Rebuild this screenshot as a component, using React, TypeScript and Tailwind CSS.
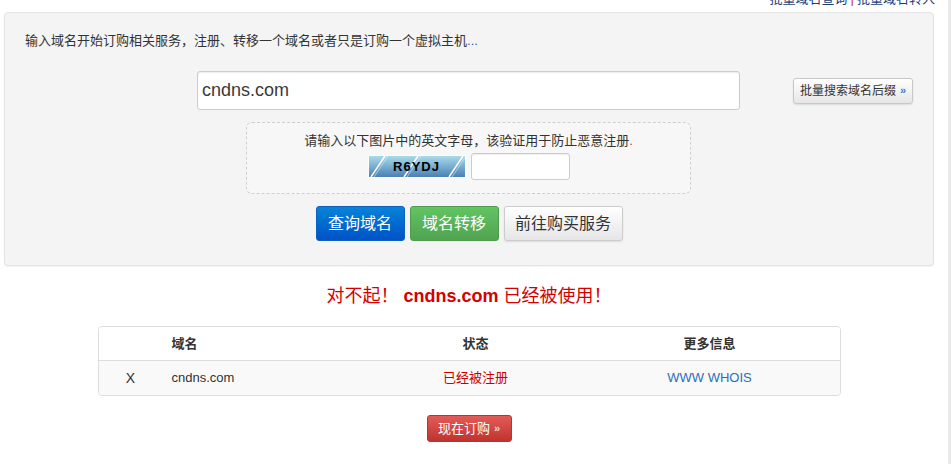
import React from 'react';

const font = { fontFamily: '"Liberation Sans", "Noto Sans CJK SC", sans-serif' };

function Captcha() {
  return (
    <div className="relative w-[98px] h-[23px] border border-white flex items-center justify-center">
      <svg className="absolute inset-0" width="96" height="21" viewBox="0 0 96 21">
        <defs>
          <linearGradient id="cap" x1="0" y1="0" x2="0" y2="1">
            <stop offset="0" stopColor="#a9dbea" />
            <stop offset="1" stopColor="#4a7fb4" />
          </linearGradient>
        </defs>
        <rect width="96" height="21" fill="url(#cap)" />
        <path d="M2 21 L16 0 M35 21 L49 0 M80 21 L94 0" stroke="#ffffff" strokeWidth="1.5" />
        <path d="M5 21 L19 0 M38 21 L52 0 M83 21 L97 0" stroke="#d8eef6" strokeWidth="0.6" />
      </svg>
      <span className="relative text-[13px] font-bold text-black tracking-[1px] leading-none" style={{ fontFamily: '"Liberation Sans", sans-serif' }}>
        R6YDJ
      </span>
    </div>
  );
}

export default function App() {
  return (
    <div className="w-[951px] h-[464px] overflow-hidden bg-white flex text-[#333]" style={font}>
      <div className="w-[948px] flex flex-col">
        {/* top links, half clipped by the window */}
        <div className="-mt-[8px] h-[20px] flex justify-end pr-[13px] text-[13px] leading-[13px]">
          <span className="text-[#16407a]">批量域名查询</span>
          <span className="text-[#c0392b] px-[3px]">|</span>
          <span className="text-[#16407a]">批量域名转入</span>
        </div>

        {/* search panel */}
        <div className="ml-[4px] w-[930px] h-[254px] rounded-[4px] border border-[#e3e3e3] bg-[#f4f4f4] shadow-[0_1px_1px_rgba(0,0,0,0.05)] flex flex-col">
          <p className="pt-[19px] pl-[20px] text-[13px] leading-[18px] text-[#333]">
            输入域名开始订购相关服务，注册、转移一个域名或者只是订购一个虚拟主机<span className="text-[#2a6ebb]">...</span>
          </p>

          <div className="mt-[21px] flex items-center">
            <div className="ml-[192px] w-[543px] h-[39px] bg-white border border-[#cccccc] rounded-[3px] shadow-[inset_0_1px_1px_rgba(0,0,0,0.075)] flex items-center pl-[4px] text-[18px] text-[#3a3a3a]">
              cndns.com
            </div>
            <button className="ml-[53px] w-[120px] h-[26px] rounded-[3px] border border-[#c8c8c8] bg-gradient-to-b from-white to-[#e6e6e6] shadow-[0_1px_2px_rgba(0,0,0,0.1)] text-[12px] text-[#333] flex items-center justify-center gap-[4px]">
              批量搜索域名后缀<span className="text-[#3a7bc8] text-[11px] font-bold">»</span>
            </button>
          </div>

          <div className="mt-[12px] ml-[241px] w-[445px] h-[72px] rounded-[6px] border border-dashed border-[#cfcfcf] bg-[#f7f7f7] flex flex-col items-center">
            <p className="pt-[9px] text-[13px] leading-[18px] text-[#333]">
              请输入以下图片中的英文字母，该验证用于防止恶意注册<span className="text-[#c0392b]">.</span>
            </p>
            <div className="mt-[3px] flex items-center gap-[5px]">
              <Captcha />
              <div className="w-[99px] h-[27px] bg-white border border-[#cccccc] rounded-[3px] shadow-[inset_0_1px_1px_rgba(0,0,0,0.075)]" />
            </div>
          </div>

          <div className="mt-[12px] flex justify-center gap-[5px] text-[16px] leading-none">
            <button className="w-[89px] h-[35px] rounded-[3px] border border-[#0a5fc0] bg-gradient-to-b from-[#0b83d8] to-[#0052c8] text-white">
              查询域名
            </button>
            <button className="w-[89px] h-[35px] rounded-[3px] border border-[#4f9c4f] bg-gradient-to-b from-[#62c462] to-[#51a351] text-white">
              域名转移
            </button>
            <button className="w-[119px] h-[35px] rounded-[3px] border border-[#cccccc] bg-gradient-to-b from-white to-[#e6e6e6] shadow-[0_1px_2px_rgba(0,0,0,0.1)] text-[#333]">
              前往购买服务
            </button>
          </div>
        </div>

        {/* result */}
        <div className="ml-[4px] w-[930px] flex flex-col items-center">
          <p className="mt-[18px] text-[18px] leading-[24px] text-[#d40000]">
            对不起！ <span className="font-bold">cndns.com</span> 已经被使用！
          </p>

          <div className="mt-[18px] w-[743px] rounded-[4px] border border-[#dddddd] overflow-hidden text-[13px]">
            <div className="h-[34px] bg-white flex items-center font-bold text-[#333] border-b border-[#dddddd]">
              <div className="w-[64px]" />
              <div className="w-[209px] pl-[9px]">域名</div>
              <div className="w-[208px] text-center">状态</div>
              <div className="flex-1 text-center">更多信息</div>
            </div>
            <div className="h-[34px] bg-[#f9f9f9] flex items-center">
              <div className="w-[64px] text-center text-[14px] text-[#333]">X</div>
              <div className="w-[209px] pl-[9px] text-[#333]">cndns.com</div>
              <div className="w-[208px] text-center text-[#cc0000]">已经被注册</div>
              <div className="flex-1 text-center text-[#2a6ebb]">WWW WHOIS</div>
            </div>
          </div>

          <button className="mt-[19px] w-[85px] h-[27px] rounded-[3px] border border-[#b93330] bg-gradient-to-b from-[#e35b58] to-[#c0322e] text-white text-[13px] flex items-center justify-center gap-[4px]">
            现在订购<span className="text-[11px] font-bold text-[#f6d6d6]">»</span>
          </button>
        </div>
      </div>
      <div className="w-[3px] bg-[#e9e9e9]" />
    </div>
  );
}
